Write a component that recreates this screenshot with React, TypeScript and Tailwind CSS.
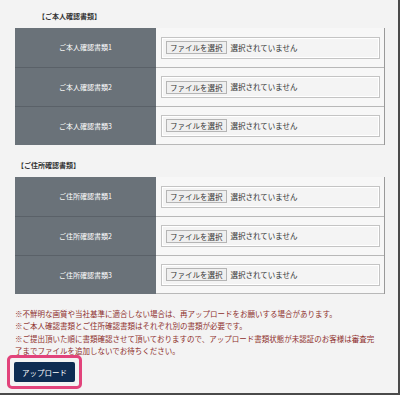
import React from "react";

const FileCell = () => (
  <div className="flex-1 bg-[#f7f7f7] flex items-center pl-[5px] pr-[4px]">
    <div className="w-full h-[22px] border border-[#c4c4c4] bg-[#f4f4f4] shadow-[inset_0_0_0_1px_#ffffff] flex items-center pl-[4px]">
      <span className="h-[13px] px-[3px] border border-[#b5b5b5] bg-[#efefef] text-[7.5px] leading-[11px] text-[#333] flex items-center">
        ファイルを選択
      </span>
      <span className="ml-[4px] text-[7.5px] text-[#333]">選択されていません</span>
    </div>
  </div>
);

const Table = ({ label }: { label: string }) => (
  <div className="ml-[15px] w-[370px] border-r border-[#9a9a9a] flex flex-col">
    {[1, 2, 3].map((n, i) => (
      <div key={n} className="flex h-[39px]">
        <div
          className={`w-[141px] bg-[#6a7279] flex items-center justify-center text-white text-[7px] ${
            i > 0 ? "border-t border-[#5a6168]" : ""
          }`}
        >
          {label}
          {n}
        </div>
        <div
          className={`flex-1 flex ${i > 0 ? "border-t border-[#b8b8b8]" : ""} ${
            i === 2 ? "border-b border-[#a8a8a8]" : ""
          }`}
        >
          <FileCell />
        </div>
      </div>
    ))}
  </div>
);

export default function App() {
  return (
    <div
      className="w-[400px] h-[395px] bg-[#f3f3f3] border-r-2 border-b-2 border-[#4a4a4a] overflow-hidden"
      style={{ fontFamily: '"Noto Sans CJK JP", "Noto Sans", sans-serif' }}
    >
      <div className="pt-[11px] pl-[38px] h-[28px] text-[7px] font-bold text-[#333]">
        【ご本人確認書類】
      </div>
      <Table label="ご本人確認書類" />
      <div className="pt-[15px] pl-[17px] h-[32px] text-[7px] font-bold text-[#333]">
        【ご住所確認書類】
      </div>
      <Table label="ご住所確認書類" />
      <div className="mt-[14px] pl-[15px] pr-[22px] text-[7.5px] leading-[12.3px] text-[#8e2f2c]">
        <div>※不鮮明な画質や当社基準に適合しない場合は、再アップロードをお願いする場合があります。</div>
        <div>※ご本人確認書類とご住所確認書類はそれぞれ別の書類が必要です。</div>
        <div>
          ※ご提出頂いた順に書類確認させて頂いておりますので、アップロード書類状態が未認証のお客様は審査完了までファイルを追加しないでお待ちください。
        </div>
      </div>
      <div className="mt-[-2px] ml-[7px] w-[75px] h-[34px] border-[3px] border-[#e2437b] rounded-[5px] flex items-center justify-center">
        <div className="w-[61px] h-[20px] bg-[#0e2c52] rounded-[2px] text-white text-[7.5px] flex items-center justify-center">
          アップロード
        </div>
      </div>
    </div>
  );
}
